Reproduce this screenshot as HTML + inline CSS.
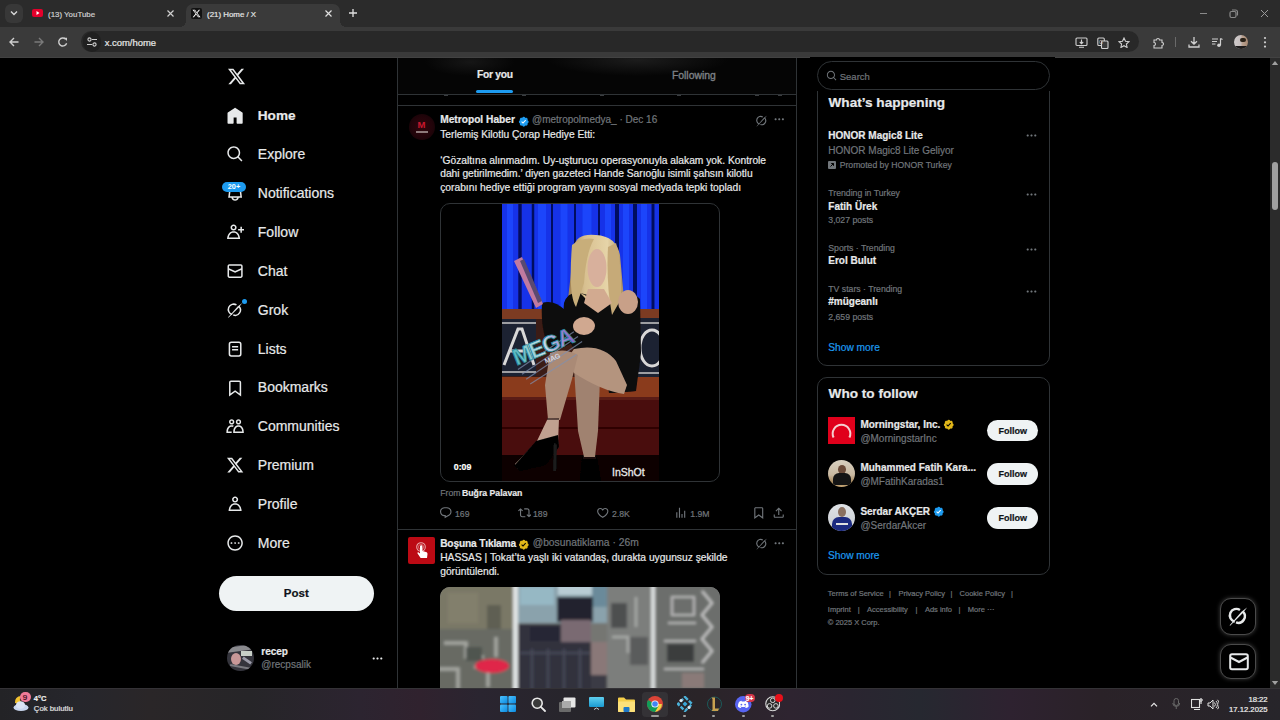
<!DOCTYPE html><html><head><meta charset="utf-8"><style>
html,body{margin:0;padding:0;width:1280px;height:720px;overflow:hidden;background:#000;}
body{position:relative;font-family:"Liberation Sans",sans-serif;}
.t{position:absolute;white-space:nowrap;line-height:1.2;-webkit-text-stroke:0.2px currentColor;}
svg{display:block}
</style></head><body>
<div style="position:absolute;left:0px;top:0px;width:1280px;height:27px;background:#2b2b2b"></div>
<div style="position:absolute;left:0px;top:27px;width:1280px;height:31px;background:#3a3a3a"></div>
<div style="position:absolute;left:0px;top:56.5px;width:1280px;height:1px;background:#424242"></div>
<div style="position:absolute;left:5px;top:4px;width:18px;height:19px;background:#383838;border-radius:6px"></div>
<svg style="position:absolute;left:9px;top:9px;" width="10" height="8" viewBox="0 0 10 8"><path d="M2 2.5l3 3 3-3" stroke="#d8d8d8" stroke-width="1.4" fill="none"/></svg>
<div style="position:absolute;left:32px;top:9px;width:11px;height:8px;background:#e3002b;border-radius:2px"></div>
<svg style="position:absolute;left:35px;top:10px;" width="6" height="6" viewBox="0 0 6 6"><path d="M1.5 1l3 2-3 2z" fill="#fff"/></svg>
<div class="t" style="left:48.00px;top:9.82px;font-size:7.9px;color:#cfcfcf;font-weight:400;">(13) YouTube</div>
<svg style="position:absolute;left:166px;top:9px;" width="9" height="9" viewBox="0 0 9 9"><path d="M1.5 1.5l6 6M7.5 1.5l-6 6" stroke="#d0d0d0" stroke-width="1.2"/></svg>
<div style="position:absolute;left:186px;top:4px;width:154px;height:23px;background:#3a3a3a;border-radius:7px 7px 0 0"></div>
<div style="position:absolute;left:180px;top:21px;width:6px;height:6px;background:radial-gradient(circle at 0 0,#2b2b2b 6px,#3a3a3a 6px)"></div>
<div style="position:absolute;left:340px;top:21px;width:6px;height:6px;background:radial-gradient(circle at 100% 0,#2b2b2b 6px,#3a3a3a 6px)"></div>
<div style="position:absolute;left:191px;top:8px;width:11px;height:11px;background:#111;border-radius:2px"></div>
<svg style="position:absolute;left:192px;top:9px;" width="9" height="9" viewBox="0 0 24 24"><path fill="#fff" d="M18.244 2.25h3.308l-7.227 8.26 8.502 11.24H16.17l-5.214-6.817L4.99 21.75H1.68l7.73-8.835L1.254 2.25H8.08l4.713 6.231zm-1.161 17.52h1.833L7.084 4.126H5.117z"/></svg>
<div class="t" style="left:207.00px;top:9.82px;font-size:7.9px;color:#e4e4e4;font-weight:400;">(21) Home / X</div>
<svg style="position:absolute;left:324px;top:9px;" width="9" height="9" viewBox="0 0 9 9"><path d="M1.5 1.5l6 6M7.5 1.5l-6 6" stroke="#e0e0e0" stroke-width="1.2"/></svg>
<svg style="position:absolute;left:348px;top:8px;" width="10" height="10" viewBox="0 0 10 10"><path d="M5 1v8M1 5h8" stroke="#e0e0e0" stroke-width="1.3"/></svg>
<div style="position:absolute;left:1200px;top:12.5px;width:7px;height:1.6px;background:#8a8a8a"></div>
<svg style="position:absolute;left:1229px;top:9px;" width="10" height="10" viewBox="0 0 10 10"><rect x="1" y="2.5" width="6" height="6" rx="1.5" stroke="#8a8a8a" stroke-width="1.2" fill="none"/><path d="M3 1h3.5a2 2 0 0 1 2 2v3.5" stroke="#8a8a8a" stroke-width="1.1" fill="none"/></svg>
<svg style="position:absolute;left:1260px;top:8.5px;" width="9" height="9" viewBox="0 0 9 9"><path d="M1 1l7 7M8 1l-7 7" stroke="#9a9a9a" stroke-width="1"/></svg>
<svg style="position:absolute;left:8px;top:36px;" width="12" height="12" viewBox="0 0 12 12"><path d="M10.5 6H2M6 2L2 6l4 4" stroke="#cfcfcf" stroke-width="1.4" fill="none"/></svg>
<svg style="position:absolute;left:33px;top:36px;" width="12" height="12" viewBox="0 0 12 12"><path d="M1.5 6H10M6 2l4 4-4 4" stroke="#7a7a7a" stroke-width="1.4" fill="none"/></svg>
<svg style="position:absolute;left:57px;top:36px;" width="12" height="12" viewBox="0 0 12 12"><path d="M9.6 7.2A4 4 0 1 1 8.6 3.2" stroke="#cfcfcf" stroke-width="1.4" fill="none"/><path d="M6.8 1.8h3.2v3.2z" fill="#cfcfcf"/></svg>
<div style="position:absolute;left:81px;top:30.7px;width:1058px;height:21.6px;background:#282828;border-radius:11px"></div>
<div style="position:absolute;left:83px;top:32px;width:18px;height:20px;background:#202020;border-radius:10px"></div>
<svg style="position:absolute;left:86px;top:36px;" width="12" height="12" viewBox="0 0 12 12"><circle cx="3.5" cy="3.5" r="1.6" stroke="#cfcfcf" stroke-width="1.1" fill="none"/><path d="M6 3.5h5M1 8.5h5" stroke="#cfcfcf" stroke-width="1.1"/><circle cx="8.5" cy="8.5" r="1.6" stroke="#cfcfcf" stroke-width="1.1" fill="none"/></svg>
<div class="t" style="left:104.70px;top:36.86px;font-size:9.45px;color:#e8e8e8;font-weight:400;">x.com/home</div>
<svg style="position:absolute;left:1075px;top:37px;" width="13" height="11" viewBox="0 0 13 11"><rect x="1" y="1" width="11" height="7.5" rx="1" stroke="#d0d0d0" stroke-width="1.1" fill="none"/><path d="M6.5 2.5v4M4.8 5l1.7 1.7L8.2 5M4 10.3h5" stroke="#d0d0d0" stroke-width="1.1" fill="none"/></svg>
<svg style="position:absolute;left:1097px;top:37px;" width="12" height="12" viewBox="0 0 12 12"><rect x="0.8" y="1" width="6.5" height="7.5" rx="1" stroke="#d0d0d0" stroke-width="1.1" fill="none"/><rect x="4.5" y="4" width="6.5" height="7.5" rx="1" fill="#3a3a3a" stroke="#d0d0d0" stroke-width="1.1"/><text x="2" y="7" font-size="5" fill="#d0d0d0" font-family="Liberation Sans">G</text></svg>
<svg style="position:absolute;left:1118px;top:37px;" width="12" height="11" viewBox="0 0 12 11"><path d="M6 1l1.5 3.2 3.5.4-2.6 2.4.7 3.5L6 8.7 2.9 10.5l.7-3.5L1 4.6l3.5-.4z" stroke="#d0d0d0" stroke-width="1.1" fill="none"/></svg>
<svg style="position:absolute;left:1152px;top:37px;" width="12" height="12" viewBox="0 0 12 12"><path d="M2 3h2.5a1.5 1.5 0 0 1 3 0H10v2.5a1.5 1.5 0 0 1 0 3V11H2V8.5a1.5 1.5 0 0 0 0-3z" stroke="#d0d0d0" stroke-width="1.1" fill="none"/></svg>
<div style="position:absolute;left:1175px;top:37px;width:1px;height:10px;background:#6a6a6a"></div>
<svg style="position:absolute;left:1188px;top:36px;" width="12" height="12" viewBox="0 0 12 12"><path d="M6 1v7M3 5.2L6 8l3-2.8M1 8.5v2.5h10V8.5" stroke="#d0d0d0" stroke-width="1.3" fill="none"/></svg>
<svg style="position:absolute;left:1211px;top:37px;" width="12" height="11" viewBox="0 0 12 11"><path d="M1 2h6M1 4.5h5M1 7h3.5" stroke="#d0d0d0" stroke-width="1.1"/><path d="M9.5 1.5v6.5" stroke="#d0d0d0" stroke-width="1.2"/><circle cx="8" cy="8.3" r="1.8" fill="#d0d0d0"/><path d="M9.5 1.5l2 1" stroke="#d0d0d0" stroke-width="1.1"/></svg>
<div style="position:absolute;left:1234.3px;top:34.5px;width:14px;height:14px;border-radius:50%;overflow:hidden;background:linear-gradient(90deg,#d0cccc 0,#c8c0c0 45%,#b8a090 60%,#a88870 100%)"><div style="position:absolute;left:6px;top:3px;width:6px;height:4px;border-radius:3px;background:#2a2218"></div><div style="position:absolute;left:0;top:11px;width:14px;height:4px;background:#1e1c1c"></div></div>
<svg style="position:absolute;left:1262px;top:36px;" width="6" height="13" viewBox="0 0 6 13"><circle cx="3" cy="2" r="1.1" fill="#d0d0d0"/><circle cx="3" cy="6.3" r="1.1" fill="#d0d0d0"/><circle cx="3" cy="10.6" r="1.1" fill="#d0d0d0"/></svg>
<div style="position:absolute;left:0px;top:58px;width:1270px;height:630px;background:#000"></div>
<div style="position:absolute;left:1270px;top:58px;width:10px;height:630px;background:#2b2b2b"></div>
<svg style="position:absolute;left:1271px;top:60px;" width="8" height="6" viewBox="0 0 8 6"><path d="M4 1l3.2 4H0.8z" fill="#a0a0a0"/></svg>
<div style="position:absolute;left:1272px;top:162px;width:6px;height:48px;background:#9f9f9f;border-radius:3px"></div>
<svg style="position:absolute;left:1271px;top:680px;" width="8" height="6" viewBox="0 0 8 6"><path d="M4 5l3.2-4H0.8z" fill="#a0a0a0"/></svg>
<svg style="position:absolute;left:226.5px;top:67px;" width="19" height="19" viewBox="0 0 24 24"><path fill="#e7e9ea" d="M18.244 2.25h3.308l-7.227 8.26 8.502 11.24H16.17l-5.214-6.817L4.99 21.75H1.68l7.73-8.835L1.254 2.25H8.08l4.713 6.231zm-1.161 17.52h1.833L7.084 4.126H5.117z"/></svg>
<svg style="position:absolute;left:226.3px;top:106.60000000000001px;" width="18.2" height="18.2" viewBox="0 0 24 24"><path fill="#e7e9ea" d="M21.591 7.146L12.52 1.157c-.316-.21-.724-.21-1.04 0l-9.071 5.99c-.26.173-.409.456-.409.757v13.183c0 .502.418.913.929.913H9.14c.51 0 .929-.41.929-.913v-7.075h3.909v7.075c0 .502.417.913.928.913h6.165c.511 0 .929-.41.929-.913V7.904c0-.301-.158-.584-.408-.758z"/></svg>
<div class="t" style="left:257.80px;top:107.83px;font-size:13.6px;color:#e7e9ea;font-weight:700;">Home</div>
<svg style="position:absolute;left:226.3px;top:145.45000000000002px;" width="18.2" height="18.2" viewBox="0 0 24 24"><path fill="#e7e9ea" d="M10.25 3.75c-3.59 0-6.5 2.91-6.5 6.5s2.91 6.5 6.5 6.5c1.795 0 3.419-.726 4.596-1.904 1.178-1.177 1.904-2.801 1.904-4.596 0-3.59-2.91-6.5-6.5-6.5zm-8.5 6.5c0-4.694 3.806-8.5 8.5-8.5s8.5 3.806 8.5 8.5c0 1.986-.682 3.815-1.824 5.262l4.781 4.781-1.414 1.414-4.781-4.781c-1.447 1.142-3.276 1.824-5.262 1.824-4.694 0-8.5-3.806-8.5-8.5z"/></svg>
<div class="t" style="left:257.80px;top:146.30px;font-size:14px;color:#e7e9ea;font-weight:400;">Explore</div>
<svg style="position:absolute;left:226.3px;top:184.3px;" width="18.2" height="18.2" viewBox="0 0 24 24"><path fill="#e7e9ea" d="M19.993 9.042C19.48 5.017 16.054 2 11.996 2s-7.49 3.021-7.999 7.051L2.866 18H7.1c.463 2.282 2.481 4 4.9 4s4.437-1.718 4.9-4h4.236l-1.143-8.958zM12 20c-1.306 0-2.417-.835-2.829-2h5.658c-.412 1.165-1.523 2-2.829 2zm-6.866-4l.847-6.698C6.364 6.272 8.941 4 11.996 4s5.627 2.268 6.013 5.295L18.864 16H5.134z"/></svg>
<div class="t" style="left:257.80px;top:185.15px;font-size:14px;color:#e7e9ea;font-weight:400;">Notifications</div>
<svg style="position:absolute;left:226.3px;top:223.15px;" width="18.2" height="18.2" viewBox="0 0 24 24"><path fill="#e7e9ea" d="M10 4c-1.105 0-2 .9-2 2s.895 2 2 2 2-.9 2-2-.895-2-2-2zM6 6c0-2.21 1.791-4 4-4s4 1.79 4 4-1.791 4-4 4-4-1.79-4-4zm13 4v3h2v-3h3V8h-3V5h-2v3h-3v2h3zM3.651 19h12.698c-.337-1.8-1.023-3.21-1.945-4.19C13.318 13.65 11.838 13 10 13s-3.317.65-4.404 1.81c-.922.98-1.608 2.39-1.945 4.19zm.486-5.56C5.627 11.85 7.648 11 10 11s4.373.85 5.863 2.44c1.477 1.58 2.366 3.8 2.632 6.46l.11 1.1H1.395l.11-1.1c.266-2.66 1.155-4.88 2.632-6.46z"/></svg>
<div class="t" style="left:257.80px;top:224.00px;font-size:14px;color:#e7e9ea;font-weight:400;">Follow</div>
<svg style="position:absolute;left:226.3px;top:262.0px;" width="18.2" height="18.2" viewBox="0 0 24 24"><path fill="#e7e9ea" d="M1.998 5.5c0-1.381 1.119-2.5 2.5-2.5h15c1.381 0 2.5 1.119 2.5 2.5v13c0 1.381-1.119 2.5-2.5 2.5h-15c-1.381 0-2.5-1.119-2.5-2.5v-13zm2.5-.5c-.276 0-.5.224-.5.5v2.764l8 3.638 8-3.636V5.5c0-.276-.224-.5-.5-.5h-15zm15.5 5.463l-8 3.636-8-3.638V18.5c0 .276.224.5.5.5h15c.276 0 .5-.224.5-.5v-8.037z"/></svg>
<div class="t" style="left:257.80px;top:262.85px;font-size:14px;color:#e7e9ea;font-weight:400;">Chat</div>
<svg style="position:absolute;left:226.3px;top:300.84999999999997px;" width="18.2" height="18.2" viewBox="0 0 24 24"><g fill="none" stroke="#e7e9ea" stroke-width="2.0"><path d="M13.81 5.24A7 7 0 1 0 8.2 17.9"/><path d="M9.61 18.58A7 7 0 0 0 16.95 7.05"/></g><path d="M2.8 21.6L15.4 7.1L21.4 2.6L16.9 8.6L3.3 22.1z" fill="#e7e9ea"/></svg>
<div class="t" style="left:257.80px;top:301.70px;font-size:14px;color:#e7e9ea;font-weight:400;">Grok</div>
<svg style="position:absolute;left:226.3px;top:339.7px;" width="18.2" height="18.2" viewBox="0 0 24 24"><rect x="4.5" y="3" width="15" height="18" rx="2.5" fill="none" stroke="#e7e9ea" stroke-width="2"/><path d="M8 9h8M8 13h8" stroke="#e7e9ea" stroke-width="2"/></svg>
<div class="t" style="left:257.80px;top:340.55px;font-size:14px;color:#e7e9ea;font-weight:400;">Lists</div>
<svg style="position:absolute;left:226.3px;top:378.54999999999995px;" width="18.2" height="18.2" viewBox="0 0 24 24"><path fill="#e7e9ea" d="M4 4.5C4 3.12 5.119 2 6.5 2h11C18.881 2 20 3.12 20 4.5v18.44l-8-5.71-8 5.71V4.5zM6.5 4c-.276 0-.5.22-.5.5v14.56l6-4.29 6 4.29V4.5c0-.28-.224-.5-.5-.5h-11z"/></svg>
<div class="t" style="left:257.80px;top:379.40px;font-size:14px;color:#e7e9ea;font-weight:400;">Bookmarks</div>
<svg style="position:absolute;left:226.3px;top:417.4px;" width="18.2" height="18.2" viewBox="0 0 24 24"><path fill="#e7e9ea" d="M7.501 19.917L7.471 21H.472l.029-1.027c.184-6.618 3.736-8.977 7-8.977.963 0 1.95.212 2.87.672-.444.478-.851 1.03-1.212 1.656-.507-.204-1.054-.329-1.658-.329-2.767 0-4.57 2.223-4.938 6.004H7.56c-.023.302-.05.599-.059.918zm15.998.056L23.528 21H9.472l.029-1.027c.184-6.618 3.736-8.977 7-8.977s6.816 2.358 7 8.977zM21.437 19c-.367-3.781-2.17-6.004-4.938-6.004s-4.57 2.223-4.938 6.004h9.875zm-4.938-9c-.799 0-1.527-.279-2.116-.73-.836-.64-1.384-1.638-1.384-2.77 0-1.930 1.567-3.5 3.5-3.5s3.5 1.57 3.5 3.5c0 1.132-.548 2.13-1.384 2.77-.589.451-1.317.73-2.116.73zm-1.5-3.5c0 .827.673 1.5 1.5 1.5s1.5-.673 1.5-1.5-.673-1.5-1.5-1.5-1.5.673-1.5 1.5zM7.5 3C9.433 3 11 4.57 11 6.5S9.433 10 7.5 10 4 8.43 4 6.5 5.567 3 7.5 3zm0 2C6.673 5 6 5.673 6 6.5S6.673 8 7.5 8 9 7.327 9 6.5 8.327 5 7.5 5z"/></svg>
<div class="t" style="left:257.80px;top:418.25px;font-size:14px;color:#e7e9ea;font-weight:400;">Communities</div>
<svg style="position:absolute;left:226.3px;top:456.25px;" width="18.2" height="18.2" viewBox="0 0 24 24"><path fill="#e7e9ea" d="M18.244 2.25h3.308l-7.227 8.26 8.502 11.24H16.17l-5.214-6.817L4.99 21.75H1.68l7.73-8.835L1.254 2.25H8.08l4.713 6.231zm-1.161 17.52h1.833L7.084 4.126H5.117z"/></svg>
<div class="t" style="left:257.80px;top:457.10px;font-size:14px;color:#e7e9ea;font-weight:400;">Premium</div>
<svg style="position:absolute;left:226.3px;top:495.09999999999997px;" width="18.2" height="18.2" viewBox="0 0 24 24"><path fill="#e7e9ea" d="M5.651 19h12.698c-.337-1.8-1.023-3.21-1.945-4.19C15.318 13.65 13.838 13 12 13s-3.317.65-4.404 1.810c-.922.98-1.608 2.39-1.945 4.19zm.486-5.56C7.627 11.85 9.648 11 12 11s4.373.85 5.863 2.44c1.477 1.58 2.366 3.8 2.632 6.46l.11 1.1H3.395l.11-1.1c.266-2.66 1.155-4.88 2.632-6.46zM12 4c-1.105 0-2 .9-2 2s.895 2 2 2 2-.9 2-2-.895-2-2-2zM8 6c0-2.21 1.791-4 4-4s4 1.79 4 4-1.791 4-4 4-4-1.79-4-4z"/></svg>
<div class="t" style="left:257.80px;top:495.95px;font-size:14px;color:#e7e9ea;font-weight:400;">Profile</div>
<svg style="position:absolute;left:226.3px;top:533.95px;" width="18.2" height="18.2" viewBox="0 0 24 24"><path fill="#e7e9ea" d="M3.75 12c0-4.56 3.69-8.25 8.250-8.25s8.25 3.69 8.25 8.25-3.69 8.25-8.25 8.25S3.75 16.56 3.75 12zM12 1.75C6.34 1.75 1.75 6.34 1.75 12S6.34 22.25 12 22.25 22.25 17.66 22.25 12 17.66 1.75 12 1.75zm-4.75 11.5c.69 0 1.25-.56 1.25-1.25s-.56-1.25-1.25-1.25S6 11.31 6 12s.56 1.25 1.25 1.25zm9.5 0c.69 0 1.25-.56 1.25-1.25s-.56-1.25-1.25-1.25-1.25.56-1.25 1.25.56 1.25 1.25 1.25zM13.25 12c0 .69-.56 1.25-1.25 1.25s-1.25-.56-1.25-1.25.56-1.25 1.25-1.25 1.25.56 1.25 1.25z"/></svg>
<div class="t" style="left:257.80px;top:534.80px;font-size:14px;color:#e7e9ea;font-weight:400;">More</div>
<div style="position:absolute;left:222px;top:182px;width:24px;height:10px;border-radius:5px;background:#1d9bf0;color:#fff;font-size:7.3px;font-weight:700;line-height:10px;text-align:center;font-family:Liberation Sans">20+</div>
<div style="position:absolute;left:242.2px;top:299.3px;width:5px;height:5px;background:#1d9bf0;border-radius:50%"></div>
<div style="position:absolute;left:219px;top:576px;width:155px;height:34.5px;background:#eff3f4;border-radius:17.5px"></div>
<div class="t" style="left:283.80px;top:586.92px;font-size:11.5px;color:#0f1419;font-weight:700;">Post</div>
<div style="position:absolute;left:227px;top:644.5px;width:26.5px;height:26.5px;border-radius:50%;overflow:hidden;background:#34343c"><div style="position:absolute;left:0;top:1px;width:27px;height:5px;background:#8a8a8e;transform:rotate(-8deg)"></div><div style="position:absolute;left:14px;top:6px;width:11px;height:5px;background:#c8d0c8"></div><div style="position:absolute;left:4px;top:8px;width:10px;height:12px;border-radius:50%;background:#c89898"></div><div style="position:absolute;left:15px;top:14px;width:10px;height:3px;background:#9a9aa8;transform:rotate(35deg)"></div><div style="position:absolute;left:3px;top:21px;width:22px;height:2px;background:#7a7a80;transform:rotate(10deg)"></div></div>
<div class="t" style="left:261.30px;top:646.33px;font-size:10px;color:#e7e9ea;font-weight:700;">recep</div>
<div class="t" style="left:261.30px;top:659.33px;font-size:10px;color:#71767b;font-weight:400;">@recpsalik</div>
<svg style="position:absolute;left:371px;top:652px;" width="13" height="13" viewBox="0 0 24 24"><path fill="#e7e9ea" d="M3 12c0-1.1.9-2 2-2s2 .9 2 2-.9 2-2 2-2-.9-2-2zm9 2c1.1 0 2-.9 2-2s-.9-2-2-2-2 .9-2 2 .9 2 2 2zm7 0c1.1 0 2-.9 2-2s-.9-2-2-2-2 .9-2 2 .9 2 2 2z"/></svg>
<div style="position:absolute;left:396.5px;top:58px;width:1px;height:630px;background:#2f3336"></div>
<div style="position:absolute;left:795.5px;top:58px;width:1px;height:630px;background:#2f3336"></div>
<div style="position:absolute;left:397.5px;top:58px;width:398px;height:35.5px;background:radial-gradient(ellipse 90px 16px at 240px 2px,#1c1c1c,rgba(0,0,0,0)),radial-gradient(ellipse 45px 14px at 72px 4px,#161616,rgba(0,0,0,0)),#050505"></div>
<div style="position:absolute;left:444px;top:94.5px;width:4px;height:1px;background:#3a3d40"></div>
<div style="position:absolute;left:522px;top:94.5px;width:4px;height:1px;background:#3a3d40"></div>
<div style="position:absolute;left:600px;top:94.5px;width:4px;height:1px;background:#3a3d40"></div>
<div style="position:absolute;left:677px;top:94.5px;width:4px;height:1px;background:#3a3d40"></div>
<div style="position:absolute;left:755px;top:94.5px;width:4px;height:1px;background:#3a3d40"></div>
<div style="position:absolute;left:778px;top:94.5px;width:4px;height:1px;background:#3a3d40"></div>
<div class="t" style="left:477.00px;top:69.45px;font-size:10.3px;color:#e7e9ea;font-weight:700;letter-spacing:-0.3px;">For you</div>
<div class="t" style="left:671.90px;top:69.76px;font-size:10.4px;color:#7d8185;font-weight:400;-webkit-text-stroke:0.35px currentColor;">Following</div>
<div style="position:absolute;left:476px;top:90.4px;width:37px;height:3px;background:#1d9bf0;border-radius:2px"></div>
<div style="position:absolute;left:397.5px;top:93.5px;width:398px;height:1px;background:#2f3336"></div>
<div style="position:absolute;left:397.5px;top:104.5px;width:398px;height:1px;background:#2f3336"></div>
<div style="position:absolute;left:408.5px;top:114px;width:26px;height:26px;border-radius:50%;background:radial-gradient(circle,#30060c 0,#22040a 55%,#100204 100%)"></div>
<div style="position:absolute;left:415.5px;top:131px;width:12px;height:1.6px;background:#b0a0a0;opacity:.75"></div>
<div style="position:absolute;left:408.5px;top:119.5px;width:26px;text-align:center;font-size:9.5px;font-weight:700;color:#c8182e;font-family:Liberation Sans;line-height:10px">M</div>
<div class="t" style="left:440.20px;top:113.75px;font-size:10.2px;color:#e7e9ea;font-weight:700;">Metropol Haber</div>
<svg style="position:absolute;left:518px;top:115.5px;" width="11.5" height="11.5" viewBox="0 0 24 24"><path fill="#1d9bf0" d="M22.25 12c0-1.43-.88-2.67-2.19-3.34.46-1.39.2-2.9-.81-3.91s-2.52-1.27-3.91-.81c-.66-1.31-1.91-2.19-3.34-2.19s-2.67.88-3.33 2.19c-1.4-.46-2.91-.2-3.92.81s-1.26 2.52-.8 3.91c-1.31.67-2.2 1.91-2.2 3.34s.89 2.67 2.2 3.34c-.46 1.39-.21 2.9.8 3.91s2.52 1.26 3.91.81c.67 1.31 1.91 2.19 3.34 2.19s2.68-.88 3.34-2.19c1.39.45 2.9.2 3.91-.81s1.27-2.52.81-3.91c1.31-.67 2.19-1.91 2.19-3.34z"/><path fill="#fff" d="M10.54 16.2L6.8 12.46l1.41-1.42 2.26 2.26 4.8-5.23 1.47 1.36-6.2 6.77z"/></svg>
<div class="t" style="left:532.00px;top:113.94px;font-size:10px;color:#71767b;font-weight:400;">@metropolmedya_ · Dec 16</div>
<svg style="position:absolute;left:754.5px;top:113.5px;" width="13.5" height="13.5" viewBox="0 0 24 24"><g fill="none" stroke="#71767b" stroke-width="2.0"><path d="M13.81 5.24A7 7 0 1 0 8.2 17.9"/><path d="M9.61 18.58A7 7 0 0 0 16.95 7.05"/></g><path d="M2.8 21.6L15.4 7.1L21.4 2.6L16.9 8.6L3.3 22.1z" fill="#71767b"/></svg>
<svg style="position:absolute;left:772.5px;top:113px;" width="12.5" height="12.5" viewBox="0 0 24 24"><path fill="#71767b" d="M3 12c0-1.1.9-2 2-2s2 .9 2 2-.9 2-2 2-2-.9-2-2zm9 2c1.1 0 2-.9 2-2s-.9-2-2-2-2 .9-2 2 .9 2 2 2zm7 0c1.1 0 2-.9 2-2s-.9-2-2-2-2 .9-2 2 .9 2 2 2z"/></svg>
<div class="t" style="left:440.20px;top:128.60px;font-size:10.25px;color:#e7e9ea;font-weight:400;">Terlemiş Kilotlu Çorap Hediye Etti:</div>
<div class="t" style="left:440.20px;top:155.16px;font-size:10.25px;color:#e7e9ea;font-weight:400;">‘Gözaltına alınmadım. Uy-uşturucu operasyonuyla alakam yok. Kontrole</div>
<div class="t" style="left:440.20px;top:168.44px;font-size:10.25px;color:#e7e9ea;font-weight:400;">dahi getirilmedim.’ diyen gazeteci Hande Sarıoğlu isimli şahsın kilotlu</div>
<div class="t" style="left:440.20px;top:181.72px;font-size:10.25px;color:#e7e9ea;font-weight:400;">çorabını hediye ettiği program yayını sosyal medyada tepki topladı</div>
<div style="position:absolute;left:440px;top:203px;width:280px;height:279px;border:1px solid #2f3336;box-sizing:border-box;border-radius:10px;overflow:hidden;background:#000"><svg style="position:absolute;left:61px;top:-1px" width="157" height="279" viewBox="0 0 157 279">
<defs>
<linearGradient id="cur" x1="0" y1="0" x2="157" y2="0" gradientUnits="userSpaceOnUse">
<stop offset="0" stop-color="#0c2ad0"/><stop offset=".07" stop-color="#1d44f2"/><stop offset=".11" stop-color="#0a1880"/><stop offset=".14" stop-color="#1a42f0"/>
<stop offset=".2" stop-color="#1436e0"/><stop offset=".23" stop-color="#0a1c90"/><stop offset=".27" stop-color="#1c45f5"/><stop offset=".31" stop-color="#0c1c88"/><stop offset=".35" stop-color="#1b44f2"/>
<stop offset=".42" stop-color="#1a40ee"/><stop offset=".45" stop-color="#0c22a0"/><stop offset=".5" stop-color="#1e48f8"/><stop offset=".6" stop-color="#1a40ea"/><stop offset=".63" stop-color="#0a1a88"/><stop offset=".67" stop-color="#1c46f5"/>
<stop offset=".73" stop-color="#1a40ec"/><stop offset=".76" stop-color="#0a1c8c"/><stop offset=".8" stop-color="#1b44f2"/><stop offset=".85" stop-color="#1a3ee8"/><stop offset=".88" stop-color="#0a1a84"/><stop offset=".92" stop-color="#1a42ee"/><stop offset=".96" stop-color="#1438d8"/><stop offset="1" stop-color="#0a1c90"/>
</linearGradient>
<linearGradient id="hairg" x1="0" y1="0" x2="1" y2="0"><stop offset="0" stop-color="#9a7c50"/><stop offset=".3" stop-color="#d8c090"/><stop offset=".7" stop-color="#e6d4a8"/><stop offset="1" stop-color="#a88a5c"/></linearGradient>
<linearGradient id="megag" x1="0" y1="0" x2="1" y2="0"><stop offset="0" stop-color="#50b8c0"/><stop offset=".5" stop-color="#c8e0e8"/><stop offset="1" stop-color="#8a5ac8"/></linearGradient>
<filter id="bl"><feGaussianBlur stdDeviation="0.7"/></filter>
</defs>
<g filter="url(#bl)">
<rect x="-2" y="-2" width="161" height="110" fill="#1232e8"/><rect x="5.0" y="-2" width="6" height="110" fill="#2048ff" opacity=".8"/><rect x="36.0" y="-2" width="8" height="110" fill="#2048ff" opacity=".8"/><rect x="58.5" y="-2" width="7" height="110" fill="#2048ff" opacity=".8"/><rect x="80.5" y="-2" width="9" height="110" fill="#2048ff" opacity=".8"/><rect x="103.0" y="-2" width="6" height="110" fill="#2048ff" opacity=".8"/><rect x="121.0" y="-2" width="6" height="110" fill="#2048ff" opacity=".8"/><rect x="139.0" y="-2" width="6" height="110" fill="#2048ff" opacity=".8"/><rect x="16.25" y="-2" width="3.5" height="110" fill="#061060"/><rect x="29.75" y="-2" width="2.5" height="110" fill="#061060"/><rect x="49.0" y="-2" width="2" height="110" fill="#061060"/><rect x="72.0" y="-2" width="2" height="110" fill="#061060"/><rect x="96.0" y="-2" width="2" height="110" fill="#061060"/><rect x="113.0" y="-2" width="4" height="110" fill="#061060"/><rect x="131.0" y="-2" width="4" height="110" fill="#061060"/><rect x="149.5" y="-2" width="3" height="110" fill="#061060"/>
<rect x="-2" y="106" width="161" height="12" fill="#7c3a20"/>
<rect x="-2" y="116" width="161" height="58" fill="#3a1a12"/>
<rect x="-2" y="116" width="36" height="57" fill="#1e2030"/>
<path d="M-2 120h36M-2 169h36" stroke="#c8c8c8" stroke-width="1.6"/>
<path d="M2 162L16 126h4l12 36M8 148h18" fill="none" stroke="#d8d8d8" stroke-width="3"/>
<rect x="131" y="115" width="27" height="60" fill="#1e2030"/>
<path d="M131 120h27M131 170h27" stroke="#c8c8c8" stroke-width="1.6"/>
<ellipse cx="150" cy="145" rx="12" ry="18" fill="none" stroke="#d8d8d8" stroke-width="3"/>
<rect x="-2" y="174" width="161" height="22" fill="#8a3a1e"/>
<rect x="-2" y="195" width="161" height="60" fill="#4a0c0c"/>
<rect x="-2" y="194" width="161" height="3" fill="#5a1a12"/>
<rect x="-2" y="224" width="161" height="2" fill="#2e0606"/>
<rect x="-2" y="252" width="161" height="29" fill="#080606"/>
<path d="M72 44 Q74 30 94 32 Q114 33 118 52 L122 96 Q124 112 116 118 L100 108 L78 118 Q64 112 66 96z" fill="url(#hairg)"/>
<path d="M62 100 Q66 88 78 90 L96 108 L114 96 Q128 86 138 96 L139 150 L134 188 L107 190 L102 160 L80 156 Q58 132 62 100z" fill="#0b0b0d"/>
<path d="M78 90 Q88 92 96 108 L86 92z" fill="#0b0b0d"/>
<ellipse cx="95" cy="65" rx="9.5" ry="19" fill="#d8b09c"/>
<path d="M70 42 Q80 34 92 36 Q84 50 82 80 L74 104 Q66 92 70 42z" fill="#c8ae7a"/>
<path d="M114 40 Q120 60 119 96 L110 112 Q104 80 106 44z" fill="#c6aa78"/>
<path d="M86 86 L102 86 L110 100 L96 110 L82 100z" fill="#d2aa90"/>
<ellipse cx="126" cy="99" rx="10" ry="12" fill="#c8a088"/>
<ellipse cx="82" cy="123" rx="11" ry="9" fill="#d0a890"/>
<path d="M40 100 Q52 96 64 108 L70 140 L50 150 Q38 130 40 100z" fill="#0b0b0d"/>
<path d="M12 58 L20 54 L41 101 L34 105 z" fill="#c07aa0"/>
<path d="M18 58 L22 56 L40 98 L36 100z" fill="#5a4a70"/>
<path d="M106 151 L132 152 L134 188 L108 190z" fill="#0a0a0c"/>
<path d="M72 165 Q86 162 98 175 L96 228 L93 254 L82 254 L76 228z" fill="#a08270"/>
<path d="M72 146 Q100 140 114 158 L125 182 L122 191 Q100 188 72 170 Q62 158 72 146z" fill="#b4947e"/>
<path d="M48 150 Q62 144 76 152 L70 176 L58 217 L46 217 L43 182z" fill="#aa8a76"/>
<path d="M46 215 L57 216 L56 240 L40 258 L16 266 L13 261 L34 240z" fill="#c0a090"/>
<path d="M34 238 L56 232 L57 244 L44 262 L18 268 L12 263z" fill="#060606"/>
<path d="M52 240 L55 242 L54 268 L51 268z" fill="#1a1a1a"/>
<path d="M45 216h12" stroke="#201010" stroke-width="1.2"/>
<path d="M80 254 L95 254 L99 278 L78 279 z" fill="#060606"/>
<path d="M81 255h13" stroke="#2a1a10" stroke-width="1.2"/>
</g>
<g transform="translate(40 146) rotate(-22)">
<path d="M-30 10 L36 -4 M-28 16 L38 2 M-26 22 L40 8 M-24 28 L30 18" stroke="#8090b0" stroke-width="1.2" opacity=".7"/>
<text x="-30" y="6" font-family="Liberation Sans" font-weight="700" font-size="23" fill="url(#megag)" stroke="#2a8a9a" stroke-width=".8" letter-spacing="-1.5">MEGA</text>
<text x="-2" y="15" font-family="Liberation Sans" font-weight="700" font-size="7" fill="#d0d8e8">MAG</text>
</g>
<text x="110" y="273" font-family="Liberation Sans" font-weight="400" font-size="10.5" fill="#e8e8e8" stroke="#e8e8e8" stroke-width=".3">InShOt</text>
</svg></div>
<div class="t" style="left:453.80px;top:461.67px;font-size:8.8px;color:#fff;font-weight:700;">0:09</div>
<div class="t" style="left:440.20px;top:487.57px;font-size:8.7px;color:#71767b;font-weight:400;">From</div>
<div class="t" style="left:462.00px;top:487.57px;font-size:8.7px;color:#e7e9ea;font-weight:700;">Buğra Palavan</div>
<svg style="position:absolute;left:439.2px;top:506.3px;" width="13.5" height="13.5" viewBox="0 0 24 24"><path fill="#71767b" d="M1.751 10c0-4.42 3.584-8 8.005-8h4.366c4.49 0 8.129 3.64 8.129 8.13 0 2.96-1.607 5.68-4.196 7.11l-8.054 4.46v-3.69h-.067c-4.49.1-8.183-3.51-8.183-8.01zm8.005-6c-3.317 0-6.005 2.69-6.005 6 0 3.37 2.77 6.08 6.138 6.01l.351-.01h1.761v2.3l5.087-2.81c1.951-1.08 3.163-3.13 3.163-5.36 0-3.39-2.744-6.13-6.129-6.13H9.756z"/></svg>
<div class="t" style="left:455.00px;top:508.67px;font-size:8.7px;color:#71767b;font-weight:400;">169</div>
<svg style="position:absolute;left:517.5px;top:506.3px;" width="13.5" height="13.5" viewBox="0 0 24 24"><path fill="#71767b" d="M4.5 3.88l4.432 4.14-1.364 1.46L5.5 7.55V16c0 1.1.896 2 2 2H13v2H7.5c-2.209 0-4-1.79-4-4V7.55L1.432 9.48.068 8.02 4.5 3.88zM16.5 6H11V4h5.5c2.209 0 4 1.79 4 4v8.45l2.068-1.93 1.364 1.46-4.432 4.140-4.432-4.14 1.364-1.46 2.068 1.93V8c0-1.1-.896-2-2-2z"/></svg>
<div class="t" style="left:533.00px;top:508.67px;font-size:8.7px;color:#71767b;font-weight:400;">189</div>
<svg style="position:absolute;left:595.5px;top:506.3px;" width="13.5" height="13.5" viewBox="0 0 24 24"><path fill="#71767b" d="M16.697 5.5c-1.222-.06-2.679.51-3.89 2.16l-.805 1.09-.806-1.09C9.984 6.010 8.526 5.44 7.304 5.5c-1.243.07-2.349.78-2.91 1.91-.552 1.12-.633 2.78.479 4.82 1.074 1.97 3.257 4.27 7.129 6.61 3.87-2.34 6.052-4.64 7.126-6.61 1.111-2.04 1.03-3.7.477-4.82-.561-1.13-1.666-1.84-2.908-1.91zm4.187 7.69c-1.351 2.48-4.001 5.12-8.379 7.67l-.503.3-.504-.3c-4.379-2.55-7.029-5.19-8.382-7.67-1.36-2.5-1.41-4.86-.514-6.67.887-1.79 2.647-2.91 4.601-3.01 1.651-.09 3.368.56 4.798 2.01 1.429-1.45 3.146-2.1 4.796-2.01 1.954.1 3.714 1.22 4.601 3.01.896 1.81.846 4.17-.514 6.67z"/></svg>
<div class="t" style="left:612.00px;top:508.67px;font-size:8.7px;color:#71767b;font-weight:400;">2.8K</div>
<svg style="position:absolute;left:673.8px;top:506.3px;" width="13.5" height="13.5" viewBox="0 0 24 24"><path fill="#71767b" d="M8.75 21V3h2v18h-2zM18 21V8.5h2V21h-2zM4 21l.004-10h2L6 21H4zm9.248 0v-7h2v7h-2z"/></svg>
<div class="t" style="left:690.30px;top:508.67px;font-size:8.7px;color:#71767b;font-weight:400;">1.9M</div>
<svg style="position:absolute;left:752.3px;top:506.3px;" width="13.5" height="13.5" viewBox="0 0 24 24"><path fill="#71767b" d="M4 4.5C4 3.12 5.119 2 6.5 2h11C18.881 2 20 3.12 20 4.5v18.44l-8-5.71-8 5.71V4.5zM6.5 4c-.276 0-.5.22-.5.5v14.56l6-4.29 6 4.29V4.5c0-.28-.224-.5-.5-.5h-11z"/></svg>
<svg style="position:absolute;left:772.3px;top:506.3px;" width="13.5" height="13.5" viewBox="0 0 24 24"><path fill="#71767b" d="M12 2.59l5.7 5.7-1.41 1.42L13 6.41V16h-2V6.41l-3.3 3.3-1.41-1.42L12 2.59zM21 15l-.02 3.51c0 1.38-1.12 2.49-2.5 2.49H5.5C4.11 21 3 19.88 3 18.5V15h2v3.5c0 .28.22.5.5.5h12.98c.28 0 .5-.22.5-.5L19 15h2z"/></svg>
<div style="position:absolute;left:397.5px;top:528.5px;width:398px;height:1px;background:#2f3336"></div>
<div style="position:absolute;left:408.2px;top:537.2px;width:26.5px;height:26.5px;background:#bc0a14;border-radius:2px"></div>
<svg style="position:absolute;left:414.5px;top:542px;" width="15" height="18" viewBox="0 0 15 18"><circle cx="6" cy="5" r="4.3" fill="none" stroke="#f0c0c0" stroke-width="1.1" opacity=".85"/><circle cx="6" cy="5" r="2.6" fill="none" stroke="#f0c0c0" stroke-width=".8" opacity=".6"/><path d="M5 4.5a1.2 1.2 0 0 1 2.4 0V9l3.6.9c1 .3 1.6 1.1 1.5 2.1l-.5 4H5.6L2.6 11.5c-.5-.7.3-1.6 1-1.1L5 11.5z" fill="#fff"/></svg>
<div class="t" style="left:440.20px;top:537.55px;font-size:10.2px;color:#e7e9ea;font-weight:700;letter-spacing:-0.17px;">Boşuna Tıklama</div>
<svg style="position:absolute;left:518px;top:538.5px;" width="11.5" height="11.5" viewBox="0 0 24 24"><path fill="#e2b719" d="M22.25 12c0-1.43-.88-2.67-2.19-3.34.46-1.39.2-2.9-.81-3.91s-2.52-1.27-3.91-.81c-.66-1.31-1.91-2.19-3.34-2.19s-2.67.88-3.33 2.19c-1.4-.46-2.91-.2-3.92.81s-1.26 2.52-.8 3.91c-1.31.67-2.2 1.91-2.2 3.34s.89 2.67 2.2 3.34c-.46 1.39-.21 2.9.8 3.91s2.52 1.26 3.91.81c.67 1.31 1.91 2.19 3.34 2.19s2.68-.88 3.34-2.19c1.39.45 2.9.2 3.91-.81s1.27-2.52.81-3.91c1.31-.67 2.19-1.91 2.19-3.34z"/><path fill="#000" d="M10.54 16.2L6.8 12.46l1.41-1.42 2.26 2.26 4.8-5.23 1.47 1.36-6.2 6.77z"/></svg>
<div class="t" style="left:532.70px;top:537.45px;font-size:10.3px;color:#71767b;font-weight:400;">@bosunatiklama · 26m</div>
<svg style="position:absolute;left:754.5px;top:536.8px;" width="13.5" height="13.5" viewBox="0 0 24 24"><g fill="none" stroke="#71767b" stroke-width="2.0"><path d="M13.81 5.24A7 7 0 1 0 8.2 17.9"/><path d="M9.61 18.58A7 7 0 0 0 16.95 7.05"/></g><path d="M2.8 21.6L15.4 7.1L21.4 2.6L16.9 8.6L3.3 22.1z" fill="#71767b"/></svg>
<svg style="position:absolute;left:772.5px;top:537.2px;" width="12.5" height="12.5" viewBox="0 0 24 24"><path fill="#71767b" d="M3 12c0-1.1.9-2 2-2s2 .9 2 2-.9 2-2 2-2-.9-2-2zm9 2c1.1 0 2-.9 2-2s-.9-2-2-2-2 .9-2 2 .9 2 2 2zm7 0c1.1 0 2-.9 2-2s-.9-2-2-2-2 .9-2 2 .9 2 2 2z"/></svg>
<div class="t" style="left:440.20px;top:552.00px;font-size:10.25px;color:#e7e9ea;font-weight:400;">HASSAS | Tokat’ta yaşlı iki vatandaş, durakta uygunsuz şekilde</div>
<div class="t" style="left:440.20px;top:566.10px;font-size:10.25px;color:#e7e9ea;font-weight:400;">görüntülendi.</div>
<div style="position:absolute;left:440px;top:587px;width:280px;height:101px;border-radius:10px 10px 0 0;overflow:hidden;background:#888"><svg style="position:absolute;left:0;top:0" width="280" height="101" viewBox="0 0 280 101">
<filter id="b2" x="-5%" y="-5%" width="110%" height="110%"><feGaussianBlur stdDeviation="1.6"/></filter>
<g filter="url(#b2)">
<rect x="-4" y="-4" width="288" height="109" fill="#747672"/>
<rect x="-4" y="-4" width="78" height="46" fill="#7a7866"/>
<rect x="8" y="6" width="30" height="30" fill="#827f6c"/>
<rect x="47" y="18" width="14" height="24" fill="#5e5e52"/>
<rect x="-4" y="42" width="78" height="63" fill="#686a64"/>
<path d="M4 56h22v14h18M-2 82h20v20M34 80h14v20M56 50v20" stroke="#a4a6a0" stroke-width="3.5" fill="none"/>
<rect x="26" y="60" width="16" height="14" fill="#505450"/>
<ellipse cx="52" cy="79" rx="17" ry="7" fill="#e02848"/>
<rect x="73" y="-4" width="5" height="109" fill="#dfe3e3"/>
<rect x="78" y="-4" width="89" height="40" fill="#8aa2ac"/>
<rect x="80" y="0" width="34" height="18" fill="#96b8c4"/>
<rect x="118" y="-4" width="36" height="12" fill="#b8ccd4"/>
<rect x="152" y="-4" width="15" height="24" fill="#6a8a9a"/>
<rect x="78" y="37" width="73" height="68" fill="#30323e"/>
<rect x="90" y="40" width="30" height="14" fill="#262834"/>
<rect x="117" y="10" width="36" height="25" fill="#24242e"/>
<rect x="121" y="33" width="30" height="22" fill="#7a6a72"/>
<path d="M92 62v43M108 62v43M124 62v43M140 62v43M80 66h70" stroke="#4a4c5a" stroke-width="2"/>
<rect x="151" y="55" width="20" height="50" fill="#8a7878"/>
<rect x="151" y="88" width="20" height="17" fill="#3a3a44"/>
<rect x="167" y="-4" width="44" height="109" fill="#7c7e7c"/>
<rect x="171" y="16" width="16" height="25" fill="#4e5050"/>
<rect x="190" y="50" width="18" height="28" fill="#5a5c5c"/>
<path d="M172 50h16v16M196 10v30" stroke="#a8aaa8" stroke-width="2.5" fill="none"/>
<rect x="211" y="-4" width="4.5" height="109" fill="#d8dcdc"/>
<rect x="215.5" y="-4" width="70" height="109" fill="#6c6e6c"/>
<path d="M262 4l10 12-10 12 10 12-10 12 10 12-10 12" stroke="#c4c4c4" stroke-width="2.5" fill="none"/>
<path d="M232 10h22v18h-22zM228 36h28M224 54h32M224 82h40" stroke="#b8b8b8" stroke-width="2.2" fill="none"/>
<rect x="227" y="57" width="27" height="18" fill="#3a3c3c"/>
<rect x="242" y="86" width="22" height="15" fill="#8a7a78"/>
</g>
</svg></div>
<div style="position:absolute;left:816.5px;top:61px;width:233.5px;height:29px;box-sizing:border-box;border:1px solid #2f3336;border-radius:15px"></div>
<svg style="position:absolute;left:825.5px;top:70px;" width="11.5" height="11.5" viewBox="0 0 24 24"><path fill="#71767b" d="M10.25 3.75c-3.59 0-6.5 2.91-6.5 6.5s2.91 6.5 6.5 6.5c1.795 0 3.419-.726 4.596-1.904 1.178-1.177 1.904-2.801 1.904-4.596 0-3.59-2.91-6.5-6.5-6.5zm-8.5 6.5c0-4.694 3.806-8.5 8.5-8.5s8.5 3.806 8.5 8.5c0 1.986-.682 3.815-1.824 5.262l4.781 4.781-1.414 1.414-4.781-4.781c-1.447 1.142-3.276 1.824-5.262 1.824-4.694 0-8.5-3.806-8.5-8.5z"/></svg>
<div class="t" style="left:839.75px;top:70.51px;font-size:9.5px;color:#71767b;font-weight:400;">Search</div>
<div style="position:absolute;left:817px;top:70px;width:233px;height:295.5px;box-sizing:border-box;border:1px solid #2f3336;border-radius:10px"></div>
<div style="position:absolute;left:810px;top:57px;width:245px;height:35px;background:#000"></div>
<div style="position:absolute;left:816.5px;top:61px;width:233.5px;height:29px;box-sizing:border-box;border:1px solid #2f3336;border-radius:15px"></div>
<svg style="position:absolute;left:825.5px;top:70px;" width="11.5" height="11.5" viewBox="0 0 24 24"><path fill="#71767b" d="M10.25 3.75c-3.59 0-6.5 2.91-6.5 6.5s2.91 6.5 6.5 6.5c1.795 0 3.419-.726 4.596-1.904 1.178-1.177 1.904-2.801 1.904-4.596 0-3.59-2.91-6.5-6.5-6.5zm-8.5 6.5c0-4.694 3.806-8.5 8.5-8.5s8.5 3.806 8.5 8.5c0 1.986-.682 3.815-1.824 5.262l4.781 4.781-1.414 1.414-4.781-4.781c-1.447 1.142-3.276 1.824-5.262 1.824-4.694 0-8.5-3.806-8.5-8.5z"/></svg>
<div class="t" style="left:839.75px;top:70.51px;font-size:9.5px;color:#71767b;font-weight:400;">Search</div>
<div style="position:absolute;left:817px;top:91px;width:1px;height:4px;background:#2f3336"></div>
<div style="position:absolute;left:1049px;top:91px;width:1px;height:4px;background:#2f3336"></div>
<div class="t" style="left:828.50px;top:95.33px;font-size:13.6px;color:#e7e9ea;font-weight:700;">What’s happening</div>
<div class="t" style="left:828.30px;top:129.94px;font-size:10px;color:#e7e9ea;font-weight:700;">HONOR Magic8 Lite</div>
<div class="t" style="left:828.30px;top:144.53px;font-size:10px;color:#71767b;font-weight:400;">HONOR Magic8 Lite Geliyor</div>
<svg style="position:absolute;left:828.3px;top:160.5px;" width="8" height="8" viewBox="0 0 8 8"><rect x="0" y="0" width="8" height="8" rx="1" fill="#71767b"/><path d="M2.5 5.5l3-3M3.2 2.5h2.3v2.3" stroke="#000" stroke-width="1" fill="none"/></svg>
<div class="t" style="left:839.70px;top:159.59px;font-size:8.67px;color:#71767b;font-weight:400;">Promoted by HONOR Turkey</div>
<svg style="position:absolute;left:1024.5px;top:128.5px;" width="13" height="13" viewBox="0 0 24 24"><path fill="#71767b" d="M3 12c0-1.1.9-2 2-2s2 .9 2 2-.9 2-2 2-2-.9-2-2zm9 2c1.1 0 2-.9 2-2s-.9-2-2-2-2 .9-2 2 .9 2 2 2zm7 0c1.1 0 2-.9 2-2s-.9-2-2-2-2 .9-2 2 .9 2 2 2z"/></svg>
<div class="t" style="left:828.30px;top:188.07px;font-size:8.7px;color:#71767b;font-weight:400;">Trending in Turkey</div>
<div class="t" style="left:828.30px;top:200.53px;font-size:10px;color:#e7e9ea;font-weight:700;">Fatih Ürek</div>
<div class="t" style="left:828.30px;top:215.47px;font-size:8.7px;color:#71767b;font-weight:400;">3,027 posts</div>
<svg style="position:absolute;left:1024.5px;top:188.2px;" width="13" height="13" viewBox="0 0 24 24"><path fill="#71767b" d="M3 12c0-1.1.9-2 2-2s2 .9 2 2-.9 2-2 2-2-.9-2-2zm9 2c1.1 0 2-.9 2-2s-.9-2-2-2-2 .9-2 2 .9 2 2 2zm7 0c1.1 0 2-.9 2-2s-.9-2-2-2-2 .9-2 2 .9 2 2 2z"/></svg>
<div class="t" style="left:828.30px;top:243.27px;font-size:8.7px;color:#71767b;font-weight:400;">Sports · Trending</div>
<div class="t" style="left:828.30px;top:254.93px;font-size:10px;color:#e7e9ea;font-weight:700;">Erol Bulut</div>
<svg style="position:absolute;left:1024.5px;top:242.9px;" width="13" height="13" viewBox="0 0 24 24"><path fill="#71767b" d="M3 12c0-1.1.9-2 2-2s2 .9 2 2-.9 2-2 2-2-.9-2-2zm9 2c1.1 0 2-.9 2-2s-.9-2-2-2-2 .9-2 2 .9 2 2 2zm7 0c1.1 0 2-.9 2-2s-.9-2-2-2-2 .9-2 2 .9 2 2 2z"/></svg>
<div class="t" style="left:828.30px;top:284.27px;font-size:8.7px;color:#71767b;font-weight:400;">TV stars · Trending</div>
<div class="t" style="left:828.30px;top:296.14px;font-size:10px;color:#e7e9ea;font-weight:700;">#mügeanlı</div>
<div class="t" style="left:828.30px;top:311.77px;font-size:8.7px;color:#71767b;font-weight:400;">2,659 posts</div>
<svg style="position:absolute;left:1024.5px;top:284.6px;" width="13" height="13" viewBox="0 0 24 24"><path fill="#71767b" d="M3 12c0-1.1.9-2 2-2s2 .9 2 2-.9 2-2 2-2-.9-2-2zm9 2c1.1 0 2-.9 2-2s-.9-2-2-2-2 .9-2 2 .9 2 2 2zm7 0c1.1 0 2-.9 2-2s-.9-2-2-2-2 .9-2 2 .9 2 2 2z"/></svg>
<div class="t" style="left:828.30px;top:342.25px;font-size:10.2px;color:#1d9bf0;font-weight:400;">Show more</div>
<div style="position:absolute;left:817px;top:377px;width:233px;height:197.5px;box-sizing:border-box;border:1px solid #2f3336;border-radius:10px"></div>
<div class="t" style="left:828.60px;top:385.83px;font-size:13.6px;color:#e7e9ea;font-weight:700;">Who to follow</div>
<div style="position:absolute;left:828px;top:416.9px;width:27px;height:27px;background:#e0001b"></div>
<svg style="position:absolute;left:828px;top:416.9px;" width="27" height="27" viewBox="0 0 27 27"><path d="M5.6 20.5A8.8 8.8 0 1 1 21.4 20.5" stroke="#f4d0d0" stroke-width="2" fill="none"/></svg>
<div class="t" style="left:860.40px;top:418.74px;font-size:10px;color:#e7e9ea;font-weight:700;">Morningstar, Inc.</div>
<div class="t" style="left:860.40px;top:432.54px;font-size:10px;color:#71767b;font-weight:400;">@MorningstarInc</div>
<svg style="position:absolute;left:942.9046874999999px;top:419.2px;" width="11.5" height="11.5" viewBox="0 0 24 24"><path fill="#e2b719" d="M22.25 12c0-1.43-.88-2.67-2.19-3.34.46-1.39.2-2.9-.81-3.91s-2.52-1.27-3.91-.81c-.66-1.31-1.91-2.19-3.34-2.19s-2.67.88-3.33 2.19c-1.4-.46-2.91-.2-3.92.81s-1.26 2.52-.8 3.91c-1.31.67-2.2 1.91-2.2 3.34s.89 2.67 2.2 3.34c-.46 1.39-.21 2.9.8 3.91s2.52 1.26 3.91.81c.67 1.31 1.91 2.19 3.34 2.19s2.68-.88 3.34-2.19c1.39.45 2.9.2 3.91-.81s1.27-2.52.81-3.91c1.31-.67 2.19-1.91 2.19-3.34z"/><path fill="#000" d="M10.54 16.2L6.8 12.46l1.41-1.42 2.26 2.26 4.8-5.23 1.47 1.36-6.2 6.77z"/></svg>
<div style="position:absolute;left:986.8px;top:419.9px;width:51.7px;height:21.5px;background:#eff3f4;border-radius:11px"></div>
<div class="t" style="left:998.50px;top:425.58px;font-size:9px;color:#0f1419;font-weight:700;">Follow</div>
<div style="position:absolute;left:828px;top:460.2px;width:27px;height:27px;border-radius:50%;overflow:hidden;background:linear-gradient(180deg,#d8d0c0 0,#c8b8a0 55%,#a88a60 80%,#c8a878 100%)"><div style="position:absolute;left:10px;top:5px;width:8px;height:9px;border-radius:50%;background:#6a4a38"></div><div style="position:absolute;left:5px;top:13px;width:18px;height:12px;border-radius:6px 6px 2px 2px;background:#141414"></div></div>
<div class="t" style="left:860.40px;top:462.04px;font-size:10px;color:#e7e9ea;font-weight:700;">Muhammed Fatih Kara...</div>
<div class="t" style="left:860.40px;top:475.84px;font-size:10px;color:#71767b;font-weight:400;">@MFatihKaradas1</div>
<div style="position:absolute;left:986.8px;top:463.2px;width:51.7px;height:21.5px;background:#eff3f4;border-radius:11px"></div>
<div class="t" style="left:998.50px;top:468.88px;font-size:9px;color:#0f1419;font-weight:700;">Follow</div>
<div style="position:absolute;left:828px;top:504px;width:27px;height:27px;border-radius:50%;overflow:hidden;background:linear-gradient(180deg,#dfe2e6 0,#c8ccd0 100%)"><div style="position:absolute;left:10px;top:3px;width:8px;height:10px;border-radius:50%;background:#8a7060"></div><div style="position:absolute;left:4px;top:13px;width:20px;height:16px;border-radius:7px 7px 0 0;background:#1c2a80"></div><div style="position:absolute;left:8px;top:19px;width:12px;height:2px;background:#e0e0e0"></div></div>
<div class="t" style="left:860.40px;top:505.83px;font-size:10px;color:#e7e9ea;font-weight:700;">Serdar AKÇER</div>
<div class="t" style="left:860.40px;top:519.63px;font-size:10px;color:#71767b;font-weight:400;">@SerdarAkcer</div>
<svg style="position:absolute;left:932.55px;top:506.29999999999995px;" width="11.5" height="11.5" viewBox="0 0 24 24"><path fill="#1d9bf0" d="M22.25 12c0-1.43-.88-2.67-2.19-3.34.46-1.39.2-2.9-.81-3.91s-2.52-1.27-3.91-.81c-.66-1.31-1.91-2.19-3.34-2.19s-2.67.88-3.33 2.19c-1.4-.46-2.91-.2-3.92.81s-1.26 2.52-.8 3.91c-1.31.67-2.2 1.91-2.2 3.34s.89 2.67 2.2 3.34c-.46 1.39-.21 2.9.8 3.91s2.52 1.26 3.91.81c.67 1.31 1.91 2.19 3.34 2.19s2.68-.88 3.34-2.19c1.39.45 2.9.2 3.91-.81s1.27-2.52.81-3.91c1.31-.67 2.19-1.91 2.19-3.34z"/><path fill="#fff" d="M10.54 16.2L6.8 12.46l1.41-1.42 2.26 2.26 4.8-5.23 1.47 1.36-6.2 6.77z"/></svg>
<div style="position:absolute;left:986.8px;top:507px;width:51.7px;height:21.5px;background:#eff3f4;border-radius:11px"></div>
<div class="t" style="left:998.50px;top:512.68px;font-size:9px;color:#0f1419;font-weight:700;">Follow</div>
<div class="t" style="left:828.00px;top:550.35px;font-size:10.2px;color:#1d9bf0;font-weight:400;">Show more</div>
<div class="t" style="left:827.80px;top:588.90px;font-size:7.5px;color:#71767b;font-weight:400;">Terms of Service</div>
<div class="t" style="left:888.90px;top:588.90px;font-size:7.5px;color:#71767b;font-weight:400;">|</div>
<div class="t" style="left:898.40px;top:588.90px;font-size:7.5px;color:#71767b;font-weight:400;">Privacy Policy</div>
<div class="t" style="left:950.40px;top:588.90px;font-size:7.5px;color:#71767b;font-weight:400;">|</div>
<div class="t" style="left:959.60px;top:588.90px;font-size:7.5px;color:#71767b;font-weight:400;">Cookie Policy</div>
<div class="t" style="left:1011.00px;top:588.90px;font-size:7.5px;color:#71767b;font-weight:400;">|</div>
<div class="t" style="left:827.80px;top:604.90px;font-size:7.5px;color:#71767b;font-weight:400;">Imprint</div>
<div class="t" style="left:857.80px;top:604.90px;font-size:7.5px;color:#71767b;font-weight:400;">|</div>
<div class="t" style="left:867.00px;top:604.90px;font-size:7.5px;color:#71767b;font-weight:400;">Accessibility</div>
<div class="t" style="left:915.60px;top:604.90px;font-size:7.5px;color:#71767b;font-weight:400;">|</div>
<div class="t" style="left:924.90px;top:604.90px;font-size:7.5px;color:#71767b;font-weight:400;">Ads info</div>
<div class="t" style="left:958.40px;top:604.90px;font-size:7.5px;color:#71767b;font-weight:400;">|</div>
<div class="t" style="left:967.80px;top:604.90px;font-size:7.5px;color:#71767b;font-weight:400;">More ···</div>
<div class="t" style="left:827.80px;top:617.80px;font-size:7.5px;color:#71767b;font-weight:400;">© 2025 X Corp.</div>
<div style="position:absolute;left:1220.3px;top:597.5px;width:35.5px;height:37px;box-sizing:border-box;border-radius:11px;background:#000;border:1px solid #4a4a4a;box-shadow:0 0 4px rgba(255,255,255,.25)"></div>
<svg style="position:absolute;left:1226.8px;top:604.8px;" width="22.5" height="22.5" viewBox="0 0 24 24"><g fill="none" stroke="#e7e9ea" stroke-width="2.6"><path d="M13.81 5.24A7 7 0 1 0 8.2 17.9"/><path d="M9.61 18.58A7 7 0 0 0 16.95 7.05"/></g><path d="M2.8 21.6L15.4 7.1L21.4 2.6L16.9 8.6L3.3 22.1z" fill="#e7e9ea"/></svg>
<div style="position:absolute;left:1220.3px;top:643.7px;width:35.5px;height:35.5px;box-sizing:border-box;border-radius:11px;background:#000;border:1px solid #4a4a4a;box-shadow:0 0 4px rgba(255,255,255,.25)"></div>
<svg style="position:absolute;left:1228.7px;top:653.3px;" width="20" height="17.5" viewBox="0 0 20 17.5"><rect x="1.2" y="1.2" width="17.6" height="15.1" rx="1.8" fill="none" stroke="#e7e9ea" stroke-width="2"/><path d="M1.5 4.5L10 9l8.5-4.5" fill="none" stroke="#e7e9ea" stroke-width="2"/></svg>
<div style="position:absolute;left:0;top:688px;width:1280px;height:32px;background:linear-gradient(90deg,#232326 0px,#26262c 80px,#2a2628 150px,#262528 250px,#2c2430 360px,#30222e 420px,#2a2530 480px,#26252a 600px,#2a2428 700px,#2e2430 790px,#2a2530 850px,#262830 920px,#2e2230 1010px,#2a2228 1100px,#27252a 1280px);border-top:1px solid #343236;box-sizing:border-box"></div>
<svg style="position:absolute;left:12px;top:692px;" width="20" height="20" viewBox="0 0 20 20"><path d="M3 11a6 6 0 0 1 6-7a5 5 0 0 0 4 8z" fill="#f2c230"/><ellipse cx="9" cy="15.5" rx="7.5" ry="3.6" fill="#c9d6ee"/><ellipse cx="8.5" cy="13" rx="4.5" ry="3.8" fill="#dbe4f5"/></svg>
<div style="position:absolute;left:20px;top:691.5px;width:10.5px;height:10.5px;background:#f07a98;border-radius:50%"></div>
<div class="t" style="left:22.80px;top:692.63px;font-size:8px;color:#3a0a18;font-weight:400;">9</div>
<div class="t" style="left:33.75px;top:694.40px;font-size:7.5px;color:#f0f0f0;font-weight:700;">4°C</div>
<div class="t" style="left:33.75px;top:704.12px;font-size:7.8px;color:#e0e0e0;font-weight:400;">Çok bulutlu</div>
<svg style="position:absolute;left:500.25px;top:696.25px;" width="16" height="16" viewBox="0 0 16 16"><defs><linearGradient id="wg" x1="0" y1="0" x2="1" y2="1"><stop offset="0" stop-color="#4cc2ff"/><stop offset="1" stop-color="#0a8ae0"/></linearGradient></defs><rect x="0" y="0" width="7.6" height="7.6" rx="1" fill="url(#wg)"/><rect x="8.4" y="0" width="7.6" height="7.6" rx="1" fill="url(#wg)"/><rect x="0" y="8.4" width="7.6" height="7.6" rx="1" fill="url(#wg)"/><rect x="8.4" y="8.4" width="7.6" height="7.6" rx="1" fill="url(#wg)"/></svg>
<svg style="position:absolute;left:530.5px;top:696.5px;" width="15" height="15" viewBox="0 0 15 15"><circle cx="6.2" cy="6.2" r="5" fill="#3a3a3a" stroke="#e8e8e8" stroke-width="1.6"/><path d="M9.8 9.8L14 14" stroke="#e8e8e8" stroke-width="1.8" stroke-linecap="round"/></svg>
<svg style="position:absolute;left:559px;top:696.5px;" width="17" height="15" viewBox="0 0 17 15"><rect x="0" y="5" width="12" height="10" rx="1" fill="#6a6a6a"/><rect x="4.5" y="0.5" width="12" height="10" rx="1" fill="#e6e6e6"/><rect x="3" y="4" width="9" height="7" fill="#aaaaaa"/></svg>
<svg style="position:absolute;left:589.4px;top:697px;" width="15" height="13" viewBox="0 0 15 13"><defs><linearGradient id="mg" x1="0" y1="0" x2="0" y2="1"><stop offset="0" stop-color="#5fd0f0"/><stop offset="1" stop-color="#1a9ad0"/></linearGradient></defs><rect x="0" y="0" width="15" height="10" rx="1" fill="url(#mg)"/><path d="M5 12.5l2.5-1.5 2.5 1.5" stroke="#cfcfcf" stroke-width="1" fill="none"/></svg>
<svg style="position:absolute;left:617.5px;top:696.5px;" width="17" height="15" viewBox="0 0 17 15"><path d="M0 1.5a1 1 0 0 1 1-1h5l2 2h8a1 1 0 0 1 1 1V14a1 1 0 0 1-1 1H1a1 1 0 0 1-1-1z" fill="#f6cf4a"/><rect x="0" y="4.5" width="17" height="10.5" rx="1" fill="#fde17a"/><rect x="5.5" y="10" width="6" height="5" rx="1" fill="#1e78c8"/></svg>
<div style="position:absolute;left:642px;top:691.6px;width:26px;height:25px;background:#343236;border-radius:4px"></div>
<div style="position:absolute;left:651px;top:715px;width:8px;height:1.5px;background:#9a9a9a;border-radius:1px"></div>
<svg style="position:absolute;left:647.25px;top:696px;" width="16" height="16" viewBox="0 0 16 16"><circle cx="8" cy="8" r="8" fill="#db4437"/><path d="M8 8L1.07 12A8 8 0 0 0 8 16z M8 8h6.93A8 8 0 0 1 8 16z" fill="#0f9d58"/><path d="M8 8L1.07 12A8 8 0 0 1 1.07 4z" fill="#0f9d58"/><path d="M8 8h6.93A8 8 0 0 1 8 16L11.5 10z" fill="#ffcd40"/><circle cx="8" cy="8" r="3.6" fill="#fff"/><circle cx="8" cy="8" r="2.8" fill="#4285f4"/></svg>
<svg style="position:absolute;left:677px;top:696px;" width="16" height="16" viewBox="0 0 16 16"><path d="M8 1l7 7-7 7-7-7z" fill="none" stroke="#4ab0d8" stroke-width="2.4" stroke-dasharray="4 1.5"/><path d="M8 5.5l2.5 2.5L8 10.5 5.5 8z" fill="#3aa8d8"/><circle cx="4" cy="4.5" r="1.6" fill="#dfe8f0"/><circle cx="12" cy="11.5" r="1.6" fill="#dfe8f0"/></svg>
<svg style="position:absolute;left:707px;top:696px;" width="15" height="16" viewBox="0 0 15 16"><circle cx="7.5" cy="8" r="7" fill="none" stroke="#1c5a5a" stroke-width="1"/><path d="M4.5 1.5h3.5v11h4l-1 2.5H4.5l1-1.5V3z" fill="#c8a050"/></svg>
<svg style="position:absolute;left:735px;top:696px;" width="16.5" height="16.5" viewBox="0 0 16.5 16.5"><circle cx="8.25" cy="8.25" r="8.25" fill="#5865f2"/><path d="M4 6c1.5-1 2.5-1.2 2.5-1.2l.3.6h2.9l.3-.6s1 .2 2.5 1.2c.8 1.6 1.2 3.2 1 4.8-1 .8-2 1.2-2.8 1.3l-.6-.9c.4-.1.8-.3 1.1-.5l-.3-.2c-1.7.8-3.6.8-5.3 0l-.3.2c.3.2.7.4 1.1.5l-.6.9c-.8-.1-1.8-.5-2.8-1.3-.2-1.6.2-3.2 1-4.8z" fill="#fff"/><circle cx="6.4" cy="8.6" r=".9" fill="#5865f2"/><circle cx="10.1" cy="8.6" r=".9" fill="#5865f2"/></svg>
<div style="position:absolute;left:745px;top:693.5px;width:9.5px;height:8.5px;background:#d4364a;border-radius:4px"></div>
<div class="t" style="left:745.80px;top:694.55px;font-size:6.5px;color:#fff;font-weight:700;">9+</div>
<svg style="position:absolute;left:764.75px;top:696px;" width="15.5" height="15.5" viewBox="0 0 15.5 15.5"><circle cx="7.75" cy="7.75" r="7" fill="#2a2a2a" stroke="#d8d8d8" stroke-width="1.1"/><circle cx="7.75" cy="4.3" r="2.3" fill="none" stroke="#d8d8d8" stroke-width="1"/><circle cx="4.6" cy="9.9" r="2.3" fill="none" stroke="#d8d8d8" stroke-width="1"/><circle cx="10.9" cy="9.9" r="2.3" fill="none" stroke="#d8d8d8" stroke-width="1"/></svg>
<div style="position:absolute;left:775px;top:693.5px;width:8px;height:8px;background:#e8101a;border-radius:50%"></div>
<div style="position:absolute;left:683.0px;top:715px;width:3px;height:1.5px;background:#a0a0a0;border-radius:1px"></div>
<div style="position:absolute;left:712.0px;top:715px;width:3px;height:1.5px;background:#a0a0a0;border-radius:1px"></div>
<div style="position:absolute;left:741.5px;top:715px;width:3px;height:1.5px;background:#a0a0a0;border-radius:1px"></div>
<div style="position:absolute;left:771.0px;top:715px;width:3px;height:1.5px;background:#a0a0a0;border-radius:1px"></div>
<svg style="position:absolute;left:1150px;top:701.5px;" width="8" height="5" viewBox="0 0 8 5"><path d="M1 4.3L4 1.3l3 3" stroke="#e8e8e8" stroke-width="1.2" fill="none"/></svg>
<svg style="position:absolute;left:1171.5px;top:698px;" width="8.5" height="11" viewBox="0 0 8.5 11"><rect x="2" y="0.5" width="4.5" height="7" rx="2.2" fill="none" stroke="#6a6a6a" stroke-width="1"/><path d="M0.8 5a3.45 3.45 0 0 0 6.9 0M4.25 8.5v2.5" stroke="#6a6a6a" stroke-width="1" fill="none"/></svg>
<svg style="position:absolute;left:1190.7px;top:697.7px;" width="12" height="12.5" viewBox="0 0 12 12.5"><rect x="0.5" y="1.5" width="8" height="8" fill="none" stroke="#e0e0e0" stroke-width="1.1"/><path d="M10 1v5M3 11.5h6" stroke="#e0e0e0" stroke-width="1.2"/><circle cx="10" cy="2" r="1.3" fill="none" stroke="#e0e0e0" stroke-width="1"/></svg>
<svg style="position:absolute;left:1206.8px;top:698.5px;" width="12" height="11" viewBox="0 0 12 11"><path d="M1 4h2l3-3v9L3 7H1z" fill="none" stroke="#e0e0e0" stroke-width="1"/><path d="M7.5 3.5a3 3 0 0 1 0 4M9 2a5 5 0 0 1 0 7M10.5 0.8a6.8 6.8 0 0 1 0 9.4" stroke="#e0e0e0" stroke-width="1" fill="none"/></svg>
<div class="t" style="left:1248.40px;top:694.51px;font-size:7.7px;color:#f0f0f0;font-weight:400;">18:22</div>
<div class="t" style="left:1229.00px;top:704.71px;font-size:7.7px;color:#f0f0f0;font-weight:400;">17.12.2025</div>
</body></html>
